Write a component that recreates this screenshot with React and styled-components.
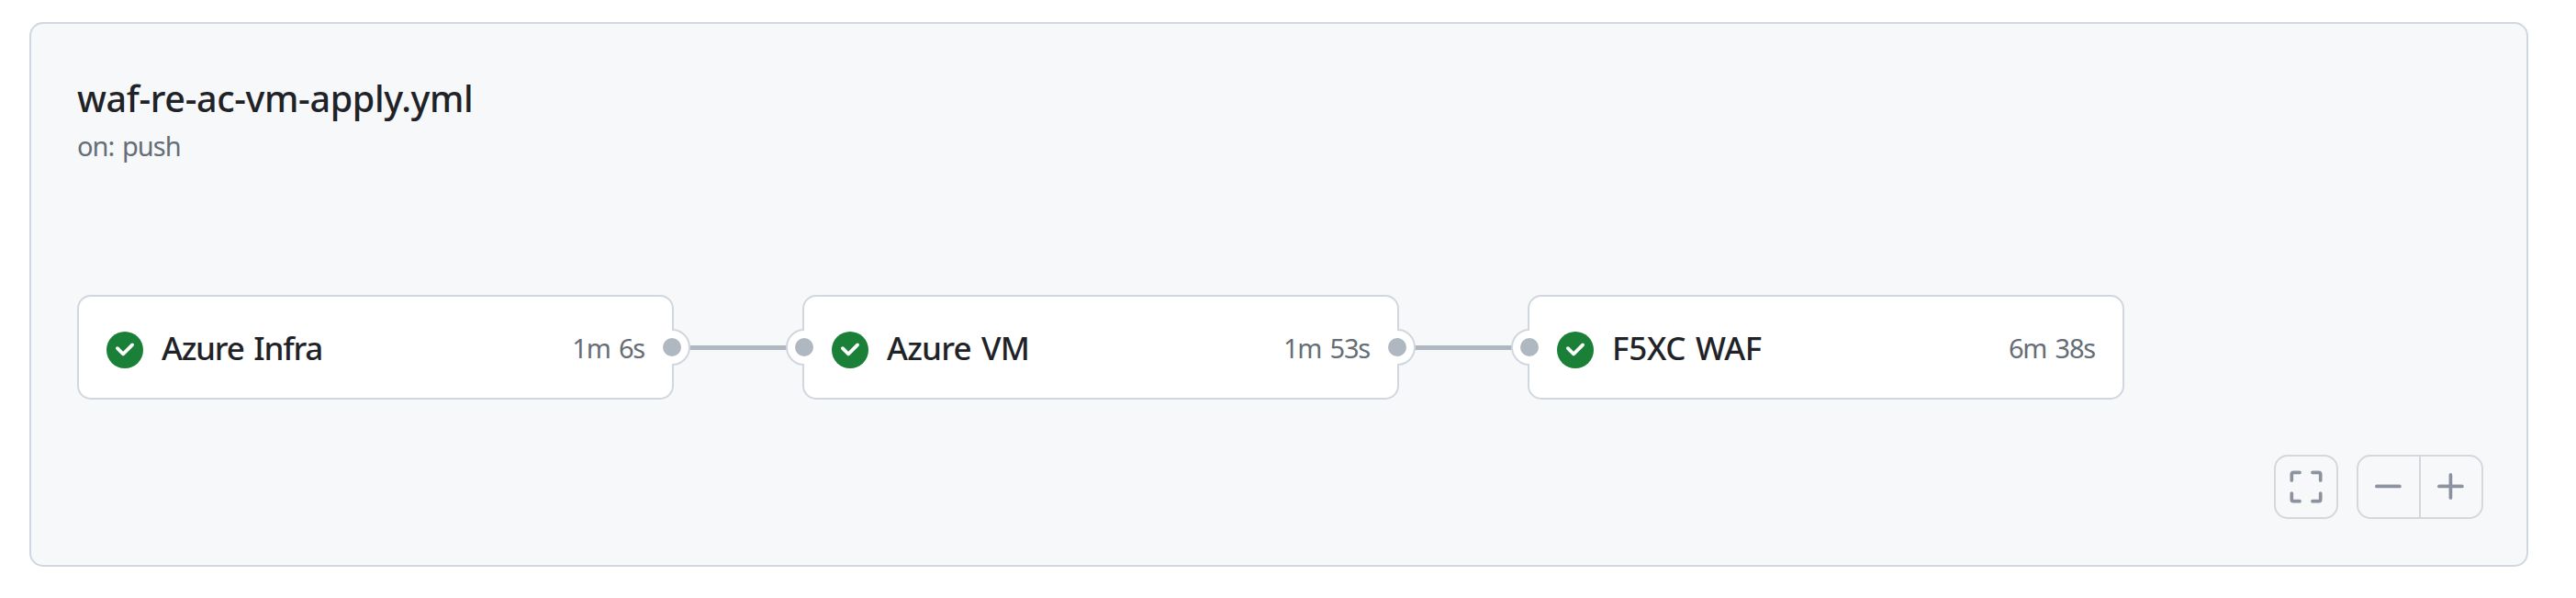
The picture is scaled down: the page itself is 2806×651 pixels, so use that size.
import React from "react";
import styled, { createGlobalStyle } from "styled-components";

const GlobalStyle = createGlobalStyle`
  * { box-sizing: border-box; }
  body {
    margin: 0;
    background: #ffffff;
    color: #1f2328;
    font-family: "Noto Sans", "Open Sans", sans-serif;
  }
`;

const Page = styled.main`
  height: 651px;
  padding: 24px 52px 34px 32px;
`;

const Panel = styled.section`
  display: flex;
  flex-direction: column;
  height: 593px;
  padding: 51px 47px 50px 50px;
  background: #f6f8fa;
  border: 2px solid #d0d7de;
  border-radius: 15px;
`;

const Header = styled.header`
  height: 244px;
`;

const Title = styled.h1`
  margin: 0;
  font-size: 39.5px;
  line-height: 60px;
  font-weight: 500;
  letter-spacing: -0.36px;
  white-space: nowrap;
`;

const Trigger = styled.p`
  margin: 0;
  font-size: 29px;
  line-height: 44px;
  letter-spacing: -0.95px;
  word-spacing: 2px;
  color: #656d76;
`;

const Jobs = styled.div`
  display: flex;
  align-items: center;
`;

const Job = styled.article`
  position: relative;
  display: flex;
  align-items: center;
  width: 650px;
  height: 114px;
  padding: 0 30px;
  background: #ffffff;
  border: 2px solid #d0d7de;
  border-radius: 15px;
`;

const JobName = styled.span`
  flex: 1;
  margin-left: 20px;
  padding-top: 1px;
  font-size: 35px;
  line-height: 52px;
  font-weight: 500;
  white-space: nowrap;
  letter-spacing: ${(p) => p.$track}px;
  word-spacing: ${(p) => p.$gap}px;
`;

const Duration = styled.span`
  padding-top: 2px;
  font-size: 29px;
  line-height: 44px;
  letter-spacing: -1.2px;
  word-spacing: 3px;
  color: #656d76;
  white-space: nowrap;
`;

const Link = styled.div`
  width: 140px;
  height: 5px;
  margin-top: 1px;
  background: #afb8c1;
`;

const PortMark = styled.svg`
  position: absolute;
  top: 35px;
  ${(p) => (p.$side === "out" ? "right: -20px;" : "left: -20px;")}
  transform: ${(p) => (p.$side === "out" ? "none" : "scaleX(-1)")};
`;

const StatusMark = styled.svg`
  flex: none;
  margin-top: 6px;
`;

const Controls = styled.div`
  display: flex;
  justify-content: flex-end;
  gap: 20px;
  margin-top: auto;
`;

const ButtonGroup = styled.div`
  display: flex;
  border: 2px solid #d4d8dc;
  border-radius: 15px;
  overflow: hidden;
`;

const IconButton = styled.button`
  display: grid;
  place-items: center;
  width: 66px;
  height: 66px;
  padding: 0;
  background: transparent;
  border: 0;
  color: #8c939f;

  & + & {
    width: 68px;
    border-left: 2px solid #d4d8dc;
  }
`;

function Port({ side }) {
  return (
    <PortMark $side={side} width="40" height="40" viewBox="0 0 40 40">
      <circle cx="20" cy="20" r="18.5" fill="#fff" />
      <path d="M20 1a19 19 0 0 1 0 38" fill="none" stroke="#d0d7de" strokeWidth="2" />
      <circle cx="20" cy="20" r="10" fill="#afb8c1" />
    </PortMark>
  );
}

function SuccessIcon() {
  return (
    <StatusMark width="40" height="40" viewBox="0 0 16 16">
      <circle cx="8" cy="8" r="8" fill="#1a7f37" />
      <path
        d="M11.78 6.28a.75.75 0 0 0-1.06-1.06L7.25 8.69 5.28 6.72a.75.75 0 0 0-1.06 1.06l2.5 2.5a.75.75 0 0 0 1.06 0Z"
        fill="#fff"
      />
    </StatusMark>
  );
}

function FitIcon() {
  return (
    <svg width="36" height="36" viewBox="0 0 36 36" fill="none" stroke="currentColor" strokeWidth="3.7" strokeLinecap="round" strokeLinejoin="round">
      <path d="M2.3 11V4.3a2 2 0 0 1 2-2H11M25 2.3h6.7a2 2 0 0 1 2 2V11M33.7 25v6.7a2 2 0 0 1-2 2H25M11 33.7H4.3a2 2 0 0 1-2-2V25" />
    </svg>
  );
}

function SignIcon({ plus }) {
  return (
    <svg width="30" height="30" viewBox="0 0 30 30" fill="none" stroke="currentColor" strokeWidth="3.7" strokeLinecap="round">
      <path d={plus ? "M1.9 14.4h25M14.4 1.9v25" : "M1.9 14.4h25"} />
    </svg>
  );
}

const jobs = [
  { name: "Azure Infra", time: "1m 6s", track: -1.25, gap: 3 },
  { name: "Azure VM", time: "1m 53s", track: -0.8, gap: 3 },
  { name: "F5XC WAF", time: "6m 38s", track: -0.3, gap: 2 },
];

export default function App() {
  return (
    <>
      <GlobalStyle />
      <Page>
        <Panel>
          <Header>
            <Title>waf-re-ac-vm-apply.yml</Title>
            <Trigger>on: push</Trigger>
          </Header>
          <Jobs>
            {jobs.map((job, i) => (
              <React.Fragment key={job.name}>
                {i > 0 && <Link />}
                <Job>
                  {i > 0 && <Port side="in" />}
                  <SuccessIcon />
                  <JobName $track={job.track} $gap={job.gap}>{job.name}</JobName>
                  <Duration>{job.time}</Duration>
                  {i < jobs.length - 1 && <Port side="out" />}
                </Job>
              </React.Fragment>
            ))}
          </Jobs>
          <Controls>
            <ButtonGroup>
              <IconButton aria-label="Fit to window"><FitIcon /></IconButton>
            </ButtonGroup>
            <ButtonGroup>
              <IconButton aria-label="Zoom out"><SignIcon /></IconButton>
              <IconButton aria-label="Zoom in"><SignIcon plus /></IconButton>
            </ButtonGroup>
          </Controls>
        </Panel>
      </Page>
    </>
  );
}
